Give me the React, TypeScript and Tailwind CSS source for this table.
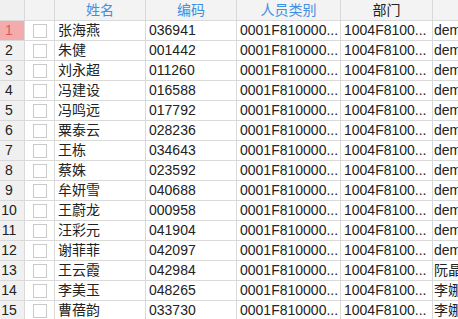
import React from "react";

const rows = [
  { name: "张海燕", code: "036941", dept: "demo" },
  { name: "朱健", code: "001442", dept: "demo" },
  { name: "刘永超", code: "011260", dept: "demo" },
  { name: "冯建设", code: "016588", dept: "demo" },
  { name: "冯鸣远", code: "017792", dept: "demo" },
  { name: "粟泰云", code: "028236", dept: "demo" },
  { name: "王栋", code: "034643", dept: "demo" },
  { name: "蔡姝", code: "023592", dept: "demo" },
  { name: "牟妍雪", code: "040688", dept: "demo" },
  { name: "王蔚龙", code: "000958", dept: "demo" },
  { name: "汪彩元", code: "041904", dept: "demo" },
  { name: "谢菲菲", code: "042097", dept: "demo" },
  { name: "王云霞", code: "042984", dept: "阮晶晶" },
  { name: "李美玉", code: "048265", dept: "李娜娜" },
  { name: "曹蓓韵", code: "033730", dept: "李娜娜" },
];

const cell = "shrink-0 border-r border-b border-[#d9d9d9] h-full overflow-hidden whitespace-nowrap";

export default function App() {
  return (
    <div
      className="w-[458px] h-[319px] overflow-hidden bg-white text-[14px] text-[#222]"
      style={{ fontFamily: '"Liberation Sans", "Noto Sans CJK SC", sans-serif' }}
    >
      <div className="flex h-[21px] bg-[#f3f3f3] leading-[20px]">
        <div className={`${cell} w-[25px] bg-[#f0f0f0]`} />
        <div className={`${cell} w-[30px]`} />
        <div className={`${cell} w-[91px] text-center text-[#3d8fe3]`}>姓名</div>
        <div className={`${cell} w-[91px] text-center text-[#3d8fe3]`}>编码</div>
        <div className={`${cell} w-[104px] text-center text-[#3d8fe3]`}>人员类别</div>
        <div className={`${cell} w-[92px] text-center`}>部门</div>
        <div className={`${cell} w-[100px]`} />
      </div>
      {rows.map((r, i) => (
        <div key={i} className="flex h-[20px] leading-[19px]">
          <div
            className={`${cell} w-[25px] pr-[6px] text-center ${
              i === 0 ? "bg-[#f4abab] text-[#e0575f]" : "bg-[#f0f0f0]"
            }`}
          >
            {i + 1}
          </div>
          <div className={`${cell} w-[30px] flex items-center pl-[8px]`}>
            <div className="w-[14px] h-[14px] border border-[#cacaca] bg-white" />
          </div>
          <div className={`${cell} w-[91px] pl-[3px]`}>{r.name}</div>
          <div className={`${cell} w-[91px] pl-[3px]`}>{r.code}</div>
          <div className={`${cell} w-[104px] pl-[3px]`}>0001F810000...</div>
          <div className={`${cell} w-[92px] pl-[3px]`}>1004F8100...</div>
          <div className={`${cell} w-[100px] pl-[1px]`}>{r.dept}</div>
        </div>
      ))}
    </div>
  );
}
